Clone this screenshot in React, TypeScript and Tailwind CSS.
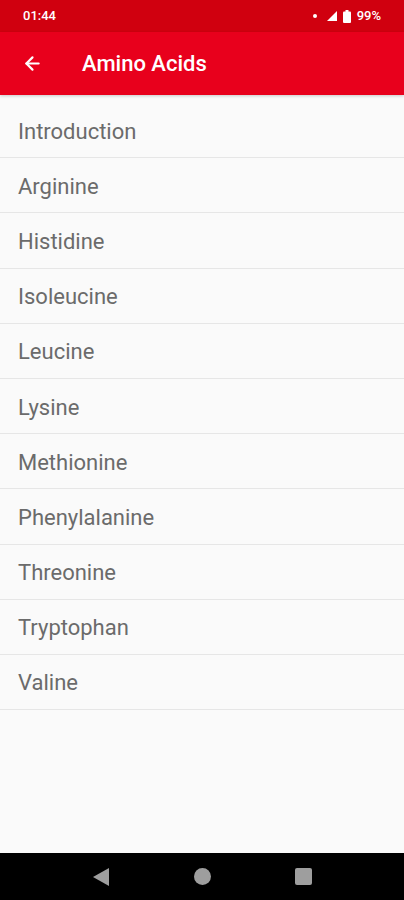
import { ArrowLeft } from "lucide-react";

const items = [
  "Introduction",
  "Arginine",
  "Histidine",
  "Isoleucine",
  "Leucine",
  "Lysine",
  "Methionine",
  "Phenylalanine",
  "Threonine",
  "Tryptophan",
  "Valine",
];

export default function App() {
  return (
    <div className="flex h-[900px] w-[404px] flex-col bg-[#fafafa] font-['Roboto',sans-serif]">
      {/* Status bar */}
      <div className="flex h-[32px] items-center justify-between bg-[#d0000f] px-[23px] text-white">
        <span className="text-[13px] font-medium">01:44</span>
        <div className="flex items-center gap-[6px]">
          <span className="h-[4px] w-[4px] rounded-full bg-white" />
          <svg width="10" height="10" viewBox="0 0 10 10" className="ml-[4px]">
            <path d="M10 0 L10 10 L0 10 Z" fill="white" />
          </svg>
          <svg width="8" height="13" viewBox="0 0 8 13">
            <rect x="2.5" y="0" width="3" height="2" fill="white" />
            <rect x="0" y="1.5" width="8" height="11.5" rx="1" fill="white" />
          </svg>
          <span className="text-[13px] font-medium">99%</span>
        </div>
      </div>

      {/* App bar */}
      <div className="flex h-[63px] items-center bg-[#e8001c] text-white shadow-[0_1px_3px_rgba(0,0,0,0.2)]">
        <ArrowLeft className="ml-[22px] h-[21px] w-[21px]" strokeWidth={2.5} />
        <span className="ml-[39px] text-[22px] font-medium">Amino Acids</span>
      </div>

      {/* List */}
      <div className="flex-1 pt-[8px]">
        {items.map((item) => (
          <div
            key={item}
            className="flex h-[55.2px] items-center border-b border-[#e6e6e6] pl-[18px] pt-[2px] text-[22px] text-[#6b6b6b]"
          >
            {item}
          </div>
        ))}
      </div>

      {/* Nav bar */}
      <div className="flex h-[47px] items-center justify-center bg-black">
        <div className="flex w-[220px] items-center justify-between">
          <svg width="18" height="20" viewBox="0 0 18 20">
            <path d="M17 1 L17 19 L1 10 Z" fill="#9e9e9e" />
          </svg>
          <span className="h-[17px] w-[17px] rounded-full bg-[#9e9e9e]" />
          <span className="h-[17px] w-[17px] rounded-[2px] bg-[#9e9e9e]" />
        </div>
      </div>
    </div>
  );
}
